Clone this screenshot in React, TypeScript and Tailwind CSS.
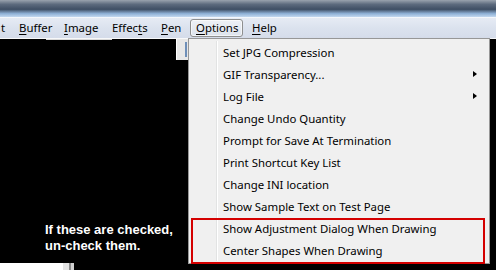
import React from "react";

const menuFont = { fontFamily: '"Noto Sans", "Open Sans", sans-serif' };

function Access({ text, at }: { text: string; at: number }) {
  return (
    <>
      {text.slice(0, at)}
      <span className="underline underline-offset-2 decoration-1">{text[at]}</span>
      {text.slice(at + 1)}
    </>
  );
}

const items: { label: string; sub?: boolean }[] = [
  { label: "Set JPG Compression" },
  { label: "GIF Transparency...", sub: true },
  { label: "Log File", sub: true },
  { label: "Change Undo Quantity" },
  { label: "Prompt for Save At Termination" },
  { label: "Print Shortcut Key List" },
  { label: "Change INI location" },
  { label: "Show Sample Text on Test Page" },
  { label: "Show Adjustment Dialog When Drawing" },
  { label: "Center Shapes When Drawing" },
];

function OptionsMenu() {
  return (
    <div className="absolute left-[188px] top-[38px] w-[302px] h-[226px] border border-[#979797] bg-[#f0f0f0] shadow-[2px_2px_2px_rgba(0,0,0,0.5)]">
      <div className="absolute left-[27px] top-[2px] bottom-[2px] w-[2px] border-l border-[#e2e3e3] border-r border-r-white" />
      <div className="relative flex flex-col pt-[2px] pl-[2px] pr-[2px]">
        {items.map((it) => (
          <div key={it.label} className="flex items-center h-[22px] text-[11.4px] text-black" style={menuFont}>
            <div className="w-[32px] shrink-0" />
            <span className="flex-1 leading-none pt-px">{it.label}</span>
            {it.sub && (
              <span className="mr-[10px] w-0 h-0 border-y-[3.5px] border-y-transparent border-l-[4px] border-l-black" />
            )}
          </div>
        ))}
      </div>
      <div className="absolute left-[2px] top-[179px] w-[294px] h-[46px] border-2 border-[#d40000]" />
    </div>
  );
}

export default function App() {
  return (
    <div className="relative w-[496px] h-[270px] overflow-hidden bg-black">
      <div className="h-[17px] bg-[linear-gradient(to_bottom,#9aa3ae,#5d6b7e_25%,#3f4f64_55%,#8fb1d6_80%,#c3d8ef)]" />
      <div className="h-px bg-[#f4f7fb]" />
      <div
        className="flex items-center h-[20px] text-[11.4px] text-black bg-[linear-gradient(to_bottom,#e6ebf4,#dbe2ee_50%,#d5dcea)]"
        style={menuFont}
      >
        <div className="w-[12px] pl-[1px]">t</div>
        <div className="w-[45px] pl-[7px]"><Access text="Buffer" at={0} /></div>
        <div className="w-[48px] pl-[7px]"><Access text="Image" at={0} /></div>
        <div className="w-[49px] pl-[7px]"><Access text="Effects" at={5} /></div>
        <div className="w-[36px] pl-[7px]"><Access text="Pen" at={0} /></div>
        <div className="w-[53px] h-[18px] flex items-center pl-[5px] border border-[#8e8f8f] rounded-[3px] bg-[linear-gradient(to_bottom,#eef1f6,#dde3ec)] shadow-[inset_0_0_0_1px_rgba(255,255,255,0.6)]">
          <Access text="Options" at={0} />
        </div>
        <div className="pl-[9px]"><Access text="Help" at={0} /></div>
      </div>
      <div className="h-px bg-[#f7f8fa]" />

      <div className="relative h-[231px]">
        <div className="absolute left-[46px] top-0 w-[66px] h-px bg-[#d8d8d8]" />
        <div className="absolute left-[176px] top-0 w-[12px] h-[21px] bg-[#e8e8e8] border-l border-white">
          <div className="ml-[8px] mt-[3px] w-[2px] h-[15px] bg-[#6f8fb8]" />
        </div>
        <p
          className="absolute left-[45px] top-[183px] text-[13px] leading-[16px] font-bold text-white"
          style={{ fontFamily: '"Liberation Sans", Arial, sans-serif' }}
        >
          If these are checked,
          <br />
          un-check them.
        </p>
        <div className="absolute left-0 bottom-0 flex h-[7px]">
          <div className="w-[63px] bg-white" />
          <div className="w-[6px] bg-[#e4e4e4]" />
          <div className="w-[2px] bg-[#8a8a8a]" />
          <div className="w-[3px] bg-[#d0d0d0]" />
        </div>
      </div>

      <OptionsMenu />
    </div>
  );
}
